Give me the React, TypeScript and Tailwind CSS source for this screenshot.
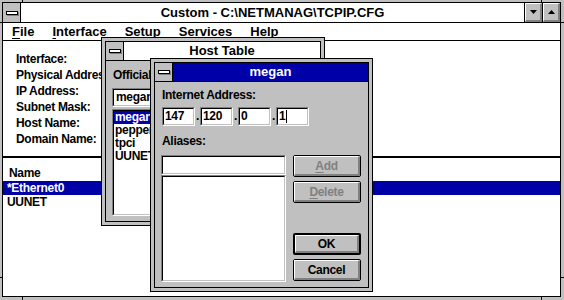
import type { ReactNode } from 'react';

function SysBox() {
    return (
        <div className="flex w-[18px] shrink-0 items-center justify-center border-r border-black bg-[#c0c0c0]">
            <div className="h-[4px] w-[12px] border border-black bg-white shadow-[1px_1px_0_#808080]" />
        </div>
    );
}

function Sunken({ className = '', children }: { className?: string; children?: ReactNode }) {
    return (
        <div className={`border border-t-[#808080] border-l-[#808080] border-b-white border-r-white ${className}`}>
            <div className="h-full w-full overflow-hidden border border-t-black border-l-black border-b-[#c0c0c0] border-r-[#c0c0c0] bg-white">
                {children}
            </div>
        </div>
    );
}

function Btn({ children, isDefault, disabled }: { children: ReactNode; isDefault?: boolean; disabled?: boolean }) {
    return (
        <div className={`h-[22px] w-[68px] rounded-[2px] border-black bg-[#c0c0c0] ${isDefault ? 'border-2' : 'border'}`}>
            <div className="flex h-full items-center justify-center border-t border-l border-b-2 border-r-2 border-t-white border-l-white border-b-[#808080] border-r-[#808080]">
                <span className={disabled ? 'text-[#808080]' : 'text-black'}>{children}</span>
            </div>
        </div>
    );
}

function ArrowBtn({ up }: { up?: boolean }) {
    return (
        <div className="flex w-[18px] shrink-0 items-center justify-center border-l border-black bg-[#c0c0c0]">
            <div className="flex h-full w-full items-center justify-center border-t border-l border-b-2 border-r-2 border-t-white border-l-white border-b-[#808080] border-r-[#808080]">
                <svg width="7" height="4" viewBox="0 0 7 4">
                    {up ? <polygon points="3.5,0 7,4 0,4" fill="#000" /> : <polygon points="0,0 7,0 3.5,4" fill="#000" />}
                </svg>
            </div>
        </div>
    );
}

function Win({ title, active, className, children }: { title: string; active?: boolean; className: string; children: ReactNode }) {
    return (
        <div className={`absolute border border-black bg-[#c0c0c0] p-[3px] ${className}`}>
            <div className="flex h-full flex-col border border-black">
                <div className="flex h-[19px] shrink-0 border-b border-black">
                    <SysBox />
                    <div className={`flex-1 text-center text-[13px] leading-[18px] ${active ? 'bg-[#0000a8] text-white' : 'bg-white text-black'}`}>{title}</div>
                </div>
                <div className="relative flex-1 overflow-hidden text-[12px] tracking-[-0.3px]">{children}</div>
            </div>
        </div>
    );
}

function IpField({ value, caret }: { value: string; caret?: boolean }) {
    return (
        <Sunken className="h-[19px] w-[33px]">
            <div className="flex h-full items-center pl-[1px] leading-[15px]">
                {value}
                {caret && <span className="ml-[1px] inline-block h-[13px] w-px bg-black" />}
            </div>
        </Sunken>
    );
}

function Dot() {
    return <span className="w-[5px] text-center leading-[19px]">.</span>;
}

export default function App() {
    const labels = ['Interface:', 'Physical Address:', 'IP Address:', 'Subnet Mask:', 'Host Name:', 'Domain Name:'];

    return (
        <div className="relative h-[300px] w-[564px] overflow-hidden bg-[#c0c0c0] pt-[2px] pr-[3px] pb-[3px] pl-[2px] font-['Liberation_Sans',Arial,sans-serif] text-[13px] font-bold text-black">
            {/* frame notches */}
            <div className="absolute top-0 left-[22px] h-[2px] w-px bg-black" />
            <div className="absolute top-0 left-[541px] h-[2px] w-px bg-black" />
            <div className="absolute top-[297px] left-[22px] h-[3px] w-px bg-black" />
            <div className="absolute top-[297px] left-[541px] h-[3px] w-px bg-black" />
            <div className="absolute top-[22px] left-0 h-px w-[2px] bg-black" />
            <div className="absolute top-[277px] left-0 h-px w-[2px] bg-black" />
            <div className="absolute top-[22px] left-[561px] h-px w-[3px] bg-black" />
            <div className="absolute top-[277px] left-[561px] h-px w-[3px] bg-black" />

            <div className="flex h-full flex-col border border-black">
                <div className="flex h-[20px] shrink-0 border-b border-black">
                    <SysBox />
                    <div className="flex-1 bg-white text-center leading-[19px]">{'Custom - C:\\NETMANAG\\TCPIP.CFG'}</div>
                    <ArrowBtn />
                    <ArrowBtn up />
                </div>
                <div className="flex h-[18px] shrink-0 gap-[18px] border-b border-black bg-white pl-[9px] leading-[17px]">
                    <span><u className="underline-offset-2">F</u>ile</span>
                    <span><u className="underline-offset-2">I</u>nterface</span>
                    <span><u className="underline-offset-2">S</u>etup</span>
                    <span>Ser<u className="underline-offset-2">v</u>ices</span>
                    <span><u className="underline-offset-2">H</u>elp</span>
                </div>
                <div className="flex flex-1 flex-col bg-white pt-[10px] text-[12px] tracking-[-0.3px]">
                    <div className="flex flex-col pl-[13px] leading-[16px]">
                        {labels.map((l) => (
                            <span key={l}>{l}</span>
                        ))}
                    </div>
                    <div className="mt-[9px] h-[2px] bg-black" />
                    <div className="mt-[7px] pl-[6px] leading-[16px]">Name</div>
                    <div className="h-[14px] bg-[#0000a8] pl-[4px] leading-[14px] text-white">*Ethernet0</div>
                    <div className="pl-[4px] leading-[14px]">UUNET</div>
                </div>
            </div>

            <Win title="Host Table" className="top-[37px] left-[101px] h-[189px] w-[224px]">
                <div className="flex flex-col">
                    <div className="mt-[6px] pl-[7px] leading-[16px]">Official Name:</div>
                    <Sunken className="mt-[5px] ml-[6px] h-[19px] w-[150px]">
                        <div className="pl-[2px] leading-[15px]">megan</div>
                    </Sunken>
                    <Sunken className="mt-[2px] ml-[6px] h-[107px] w-[150px]">
                        <div className="flex flex-col leading-[13px]">
                            <span className="bg-[#0000a8] pl-[1px] text-white">megan</span>
                            <span className="pl-[1px]">pepper</span>
                            <span className="pl-[1px]">tpci</span>
                            <span className="pl-[1px]">UUNET</span>
                        </div>
                    </Sunken>
                </div>
            </Win>

            <Win title="megan" active className="top-[58px] left-[150px] h-[234px] w-[223px]">
                <div className="flex flex-col">
                    <div className="mt-[5px] pl-[7px] leading-[16px]">Internet Address:</div>
                    <div className="mt-[4px] flex pl-[7px]">
                        <IpField value="147" />
                        <Dot />
                        <IpField value="120" />
                        <Dot />
                        <IpField value="0" />
                        <Dot />
                        <IpField value="1" caret />
                    </div>
                    <div className="mt-[7px] pl-[7px] leading-[16px]">Aliases:</div>
                    <div className="mt-[6px] flex gap-[7px] pl-[6px]">
                        <div className="flex w-[125px] flex-col">
                            <Sunken className="h-[20px]" />
                            <Sunken className="h-[107px]" />
                        </div>
                        <div className="flex flex-col">
                            <Btn disabled>
                                <u className="underline-offset-2">A</u>dd
                            </Btn>
                            <div className="mt-[4px]">
                                <Btn disabled>
                                    <u className="underline-offset-2">D</u>elete
                                </Btn>
                            </div>
                            <div className="mt-[30px]">
                                <Btn isDefault>OK</Btn>
                            </div>
                            <div className="mt-[4px]">
                                <Btn>Cancel</Btn>
                            </div>
                        </div>
                    </div>
                </div>
            </Win>
        </div>
    );
}
